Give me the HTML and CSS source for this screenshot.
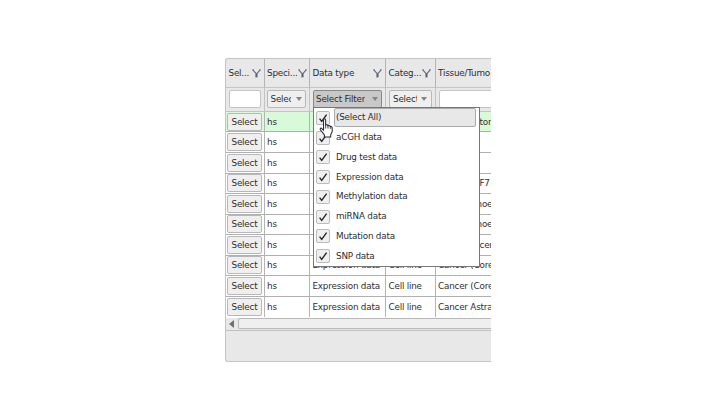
FILE: index.html
```html
<!DOCTYPE html>
<html lang="en">
<head>
<meta charset="utf-8">
<title>Data sets</title>
<link rel="stylesheet" href="styles.css">
</head>
<body>
<svg class="defs" width="0" height="0">
  <symbol id="funnel" viewBox="0 0 10 10"><path d="M.8 1 4.4 5v4.5M9.2 1 5.6 5v4.2M.4 1H2M8 1h1.6" fill="none" stroke="#5c6474" stroke-width="1.2"/></symbol>
  <symbol id="check" viewBox="0 0 10 10"><path d="M1.6 5.6 3.7 8.3 8.6 1.6" fill="none" stroke="#222" stroke-width="1.35"/></symbol>
</svg>
<div class="grid">
  <div class="row head">
    <div class="cell"><span>Sel...</span><svg class="funnel"><use href="#funnel"/></svg></div>
    <div class="cell"><span>Speci...</span><svg class="funnel"><use href="#funnel"/></svg></div>
    <div class="cell"><span>Data type</span><svg class="funnel"><use href="#funnel"/></svg></div>
    <div class="cell"><span>Categ...</span><svg class="funnel"><use href="#funnel"/></svg></div>
    <div class="cell"><span>Tissue/Tumo</span></div>
  </div>
  <div class="row filters">
    <div class="cell"><div class="input"></div></div>
    <div class="cell"><div class="drop"><span>Select</span><i></i></div></div>
    <div class="cell"><div class="drop open"><span>Select Filter</span><i></i></div></div>
    <div class="cell"><div class="drop"><span>Select</span><i></i></div></div>
    <div class="cell"><div class="input wide"></div></div>
  </div>
  <div class="body">
    <div class="row item active"><div class="cell"><button>Select</button></div><div class="cell">hs</div><div class="cell"></div><div class="cell"></div><div class="cell tail">tor</div></div>
    <div class="row item"><div class="cell"><button>Select</button></div><div class="cell">hs</div><div class="cell"></div><div class="cell"></div><div class="cell"></div></div>
    <div class="row item"><div class="cell"><button>Select</button></div><div class="cell">hs</div><div class="cell"></div><div class="cell"></div><div class="cell"></div></div>
    <div class="row item"><div class="cell"><button>Select</button></div><div class="cell">hs</div><div class="cell"></div><div class="cell"></div><div class="cell tail">F7</div></div>
    <div class="row item"><div class="cell"><button>Select</button></div><div class="cell">hs</div><div class="cell"></div><div class="cell"></div><div class="cell tail far">hoe</div></div>
    <div class="row item"><div class="cell"><button>Select</button></div><div class="cell">hs</div><div class="cell"></div><div class="cell"></div><div class="cell tail far">hoe</div></div>
    <div class="row item"><div class="cell"><button>Select</button></div><div class="cell">hs</div><div class="cell"></div><div class="cell"></div><div class="cell tail">cer</div></div>
    <div class="row item"><div class="cell"><button>Select</button></div><div class="cell">hs</div><div class="cell">Expression data</div><div class="cell">Cell line</div><div class="cell">Cancer (Core</div></div>
    <div class="row item"><div class="cell"><button>Select</button></div><div class="cell">hs</div><div class="cell">Expression data</div><div class="cell">Cell line</div><div class="cell">Cancer (Core</div></div>
    <div class="row item"><div class="cell"><button>Select</button></div><div class="cell">hs</div><div class="cell">Expression data</div><div class="cell">Cell line</div><div class="cell">Cancer Astra</div></div>
  </div>
  <div class="scroll"><i></i><div class="thumb"></div></div>
  <div class="foot"></div>
</div>
<div class="popup">
  <div class="option hover"><b><svg><use href="#check"/></svg></b><span>(Select All)</span></div>
  <div class="option"><b><svg><use href="#check"/></svg></b><span>aCGH data</span></div>
  <div class="option"><b><svg><use href="#check"/></svg></b><span>Drug test data</span></div>
  <div class="option"><b><svg><use href="#check"/></svg></b><span>Expression data</span></div>
  <div class="option"><b><svg><use href="#check"/></svg></b><span>Methylation data</span></div>
  <div class="option"><b><svg><use href="#check"/></svg></b><span>miRNA data</span></div>
  <div class="option"><b><svg><use href="#check"/></svg></b><span>Mutation data</span></div>
  <div class="option"><b><svg><use href="#check"/></svg></b><span>SNP data</span></div>
</div>
<svg class="cursor" viewBox="0 0 14 19"><path d="M4.2 11.5V2.2Q4.2.8 5.2.8T6.2 2.2V6.8Q7.8 5.8 8.4 7.4 10 6.6 10.6 8.2 12.4 7.8 12.4 9.6V13L11 16V18H5V16L1.2 11.2Q.6 9.8 2 9.5Z" fill="#fff" stroke="#26263a" stroke-width="1"/><path d="M6.2 6.8V10M8.4 7.4V10M10.6 8.2V10.4" fill="none" stroke="#26263a" stroke-width=".8"/></svg>
</body>
</html>
```
FILE: styles.css
```css
* { box-sizing: border-box; }
body {
  margin: 0;
  width: 720px;
  height: 416px;
  overflow: hidden;
  position: relative;
  padding: 58px 0 0 225px;
  background: #fff;
  color: #2e2e2e;
  font: 8.8px/12px "DejaVu Sans", sans-serif;
  letter-spacing: -.2px;
}
.defs { position: absolute; }
.grid {
  width: 266px;
  height: 304px;
  overflow: hidden;
  border: 1px solid #c4c4c4;
  border-right: 0;
  border-radius: 3px 0 0 3px;
  background: #e8e8e8;
}
.row {
  display: grid;
  grid-template-columns: 38.5px 45.5px 76px 49.5px 56px;
}
.cell {
  display: flex;
  align-items: center;
  min-width: 0;
  overflow: hidden;
  white-space: nowrap;
  border-right: 1px solid #b4b4b4;
  border-bottom: 1px solid #b0b0b0;
  padding-left: 2.5px;
}
.cell:last-child { border-right: 0; }
.head { height: 29px; }
.head .cell { justify-content: space-between; padding-right: 3.5px; border-bottom-color: #c4c4c4; }
.head .cell:last-child { padding-right: 0; }
.head .cell:first-child { padding-right: 2.5px; }
.funnel { width: 9px; height: 9px; flex: none; }
.filters { height: 23.5px; }
.filters .cell { padding: 0 3px; border-color: #c4c4c4; }
.input {
  width: 100%;
  height: 18px;
  border: 1px solid #c4c4c4;
  border-radius: 2px;
  background: #fff;
}
.input.wide { width: 80px; flex: none; }
.drop {
  width: 39px;
  height: 18px;
  flex: none;
  display: flex;
  align-items: center;
  justify-content: space-between;
  border: 1px solid #b8b8b8;
  border-radius: 2px;
  background: #efefef;
  padding: 0 3px;
}
.drop span { overflow: hidden; width: 20.5px; }
.drop i { flex: none; border: 3.5px solid transparent; border-top: 4px solid #858585; border-bottom: 0; }
.filters .cell:nth-child(2) { padding-left: 2px; }
.drop.open {
  width: 69px;
  background: #c8c8c8;
  border-color: #888;
  padding-left: 2px;
}
.drop.open span { width: auto; }
.filters .cell:nth-child(4) .drop { width: 43px; padding-right: 4px; }
.filters .cell:nth-child(4) .drop span { width: 24px; }
.body { background: #fff; height: 206px; padding-top: .4px; }
.item { height: 20.55px; }
.item:last-child .cell { border-bottom: 0; }
.active { background: #d9fad9; }
.item .cell:first-child { padding-left: 1px; }
.tail { padding-left: 44px; }
.tail.far { padding-left: 41px; }
button {
  width: 35px;
  height: 18px;
  padding: 0;
  border: 1px solid #b8b8b8;
  border-radius: 2px;
  background: #efefef;
  color: inherit;
  font: inherit;
  letter-spacing: inherit;
}
.scroll {
  height: 13px;
  display: flex;
  align-items: center;
  padding-left: 3px;
  gap: 4px;
  border-bottom: 1px solid #c0c0c0;
}
.scroll i { border: 4px solid transparent; border-right: 5px solid #707070; border-left: 0; }
.thumb {
  flex: 1;
  height: 11px;
  border: 1px solid #b8b8b8;
  border-right: 0;
  border-radius: 2px 0 0 2px;
  background: #efefef;
}
.popup {
  position: absolute;
  left: 313px;
  top: 107px;
  width: 167px;
  height: 160px;
  border: 1px solid #777;
  background: #fff;
}
.option {
  height: 19.75px;
  display: flex;
  align-items: center;
  padding-left: 2px;
  gap: 4px;
}
.option b {
  width: 14px;
  height: 14px;
  display: grid;
  place-items: center;
  border: 1px solid #bbb;
  border-radius: 2px;
  background: #efefef;
}
.option b svg { width: 10px; height: 10px; }
.option span {
  width: 142px;
  height: 19px;
  line-height: 17px;
  padding-left: 1px;
  border: 1px solid transparent;
  border-radius: 2px;
}
.option.hover span { border-color: #aaa; background: #e8e8e8; }
.cursor {
  position: absolute;
  left: 319px;
  top: 118px;
  width: 15px;
  height: 20px;
}
```
